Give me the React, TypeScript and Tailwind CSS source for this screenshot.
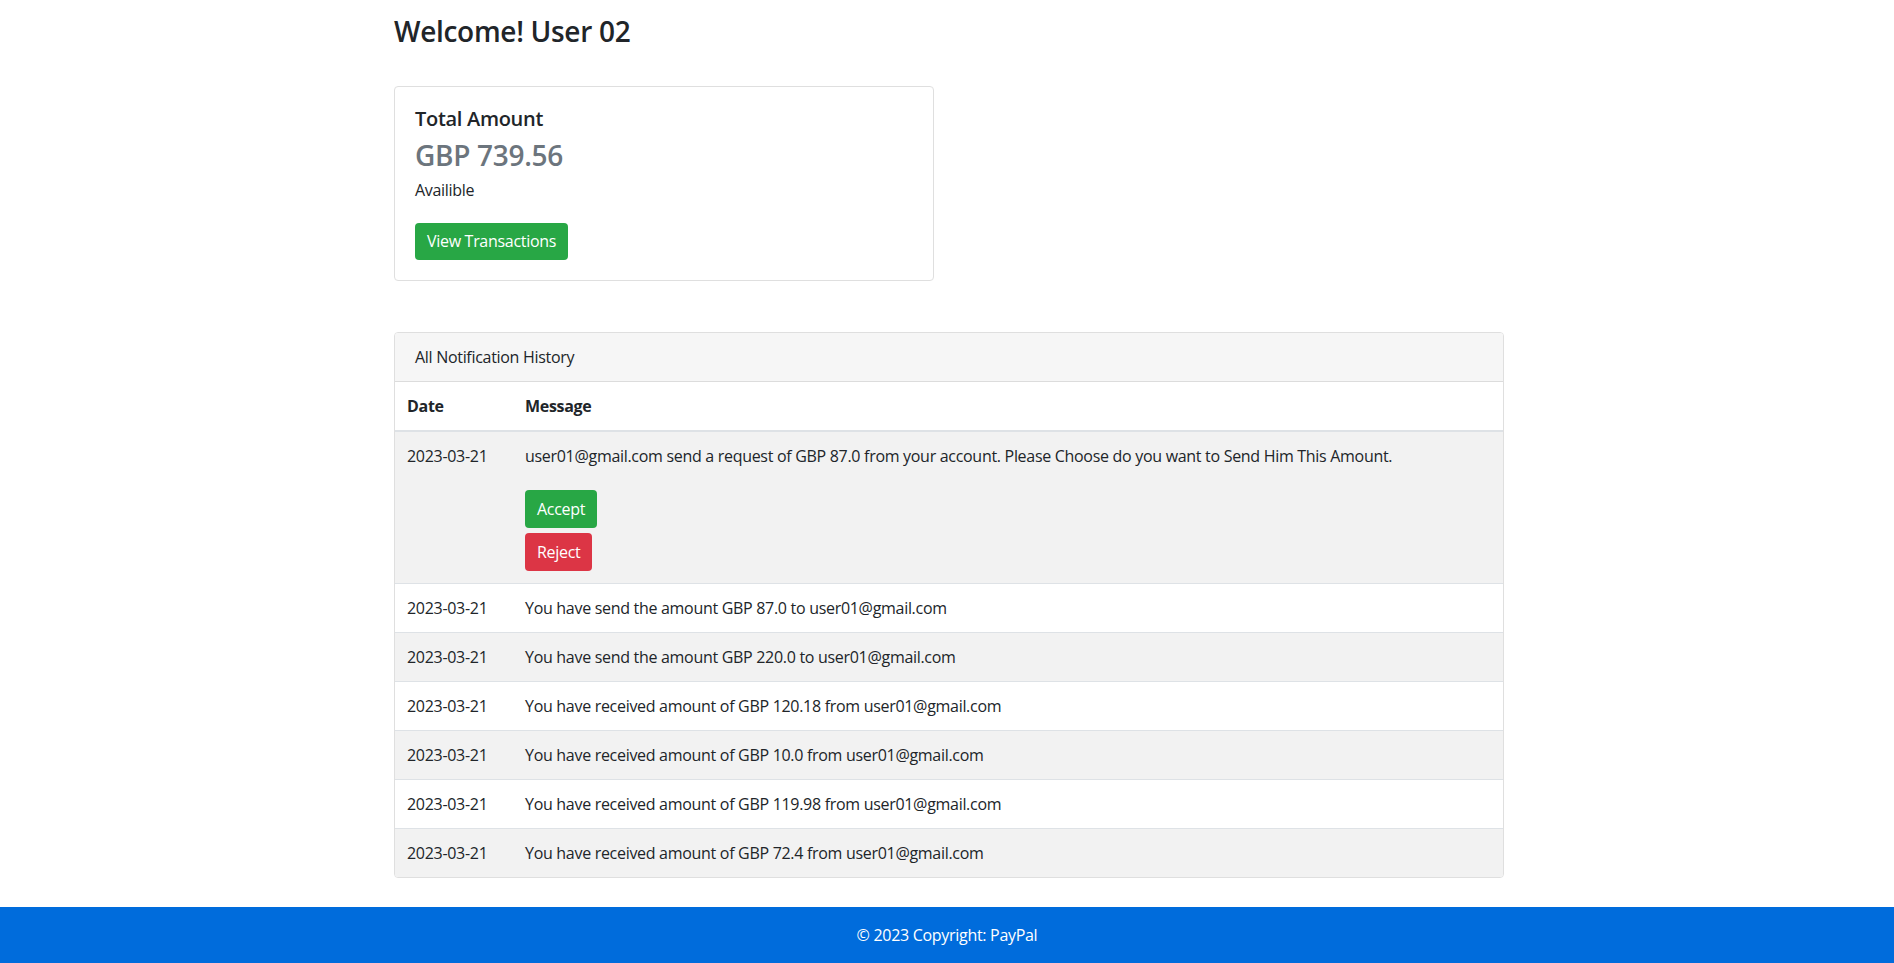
const rows = [
  "You have send the amount GBP 87.0 to user01@gmail.com",
  "You have send the amount GBP 220.0 to user01@gmail.com",
  "You have received amount of GBP 120.18 from user01@gmail.com",
  "You have received amount of GBP 10.0 from user01@gmail.com",
  "You have received amount of GBP 119.98 from user01@gmail.com",
  "You have received amount of GBP 72.4 from user01@gmail.com",
];

export default function App() {
  return (
    <div className="min-h-screen flex flex-col bg-white text-[16px] tracking-[-0.3px] text-[#212529] font-['Segoe_UI','Open_Sans',sans-serif]">
      <main className="flex-1 w-[1114px] mx-auto pl-[4px] pt-[15px]">
        <h3 className="text-[28px] leading-[1.2] font-semibold mb-[37px]">Welcome! User 02</h3>

        {/* Balance card */}
        <div className="w-[540px] border border-[#dfdfdf] rounded p-5">
          <h5 className="text-[20px] leading-[24px] font-semibold">Total Amount</h5>
          <h3 className="text-[28px] leading-[34px] font-semibold text-[#6c757d] mt-[7px]">GBP 739.56</h3>
          <p className="leading-6 mt-[6px]">Availible</p>
          <button className="mt-[21px] bg-[#28a745] text-white rounded px-3 h-[37px] leading-6">
            View Transactions
          </button>
        </div>

        {/* Notifications */}
        <div className="mt-[51px] border border-[#dfdfdf] rounded overflow-hidden">
          <div className="bg-[#f6f6f6] border-b border-[#dcdcdc] px-5 py-3 leading-6">All Notification History</div>
          <table className="w-full border-collapse">
            <thead>
              <tr className="border-b-2 border-[#dee2e6]">
                <th className="text-left font-bold px-3 py-3 w-[118px] leading-6">Date</th>
                <th className="text-left font-bold px-3 py-3 leading-6">Message</th>
              </tr>
            </thead>
            <tbody>
              <tr className="bg-[#f2f2f2] align-top">
                <td className="px-3 py-3 leading-6">2023-03-21</td>
                <td className="px-3 py-3 leading-6">
                  <p className="mb-[22px]">
                    user01@gmail.com send a request of GBP 87.0 from your account. Please Choose do you want to Send Him This Amount.
                  </p>
                  <div className="flex flex-col items-start gap-[5px]">
                    <button className="bg-[#28a745] text-white rounded px-3 h-[38px]">Accept</button>
                    <button className="bg-[#dc3545] text-white rounded px-3 h-[38px]">Reject</button>
                  </div>
                </td>
              </tr>
              {rows.map((m, i) => (
                <tr key={i} className={`border-t border-[#dee2e6] ${i % 2 === 1 ? "bg-[#f2f2f2]" : "bg-white"}`}>
                  <td className="px-3 py-3 leading-6">2023-03-21</td>
                  <td className="px-3 py-3 leading-6">{m}</td>
                </tr>
              ))}
            </tbody>
          </table>
        </div>
      </main>

      <footer className="mt-[29px] h-[56px] bg-[#006cdc] text-white flex items-center justify-center">
        © 2023 Copyright: PayPal
      </footer>
    </div>
  );
}
